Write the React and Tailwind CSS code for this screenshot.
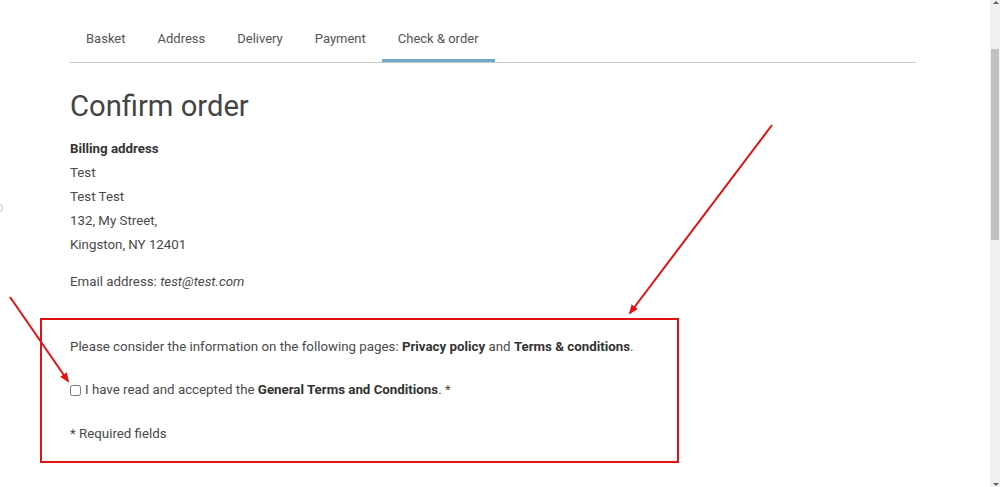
import React from 'react';

const tabs = ['Basket', 'Address', 'Delivery', 'Payment', 'Check & order'];

const Arrows = () => (
  <svg className="absolute inset-0 pointer-events-none" width="990" height="487" viewBox="0 0 990 487">
    <defs>
      <marker id="head" markerWidth="10" markerHeight="10" refX="8" refY="5" orient="auto" markerUnits="userSpaceOnUse">
        <path d="M0,1 L10,5 L0,9 Z" fill="#e31212" />
      </marker>
    </defs>
    <line x1="772" y1="125" x2="630" y2="313" stroke="#e31212" strokeWidth="2" markerEnd="url(#head)" />
    <line x1="10" y1="297" x2="68" y2="381" stroke="#e31212" strokeWidth="2" markerEnd="url(#head)" />
  </svg>
);

const Scrollbar = () => (
  <div className="w-[10px] h-[487px] bg-[#f0f0f0] relative flex-none">
    <div className="absolute top-[1px] left-[3px] w-0 h-0 border-l-[3px] border-r-[3px] border-b-[3px] border-l-transparent border-r-transparent border-b-[#606060]" />
    <div className="absolute top-[49px] left-[1px] w-[8px] h-[191px] bg-[#c1c1c1]" />
    <div className="absolute bottom-[1px] left-[3px] w-0 h-0 border-l-[3px] border-r-[3px] border-t-[3px] border-l-transparent border-r-transparent border-t-[#606060]" />
  </div>
);

export default function App() {
  return (
    <div className="flex w-[1000px] h-[487px] overflow-hidden bg-white" style={{ fontFamily: 'Roboto, "Liberation Sans", sans-serif' }}>
      <div className="relative flex-1">
        <div className="pl-[70px] w-[916px]">
          {/* Steps */}
          <nav className="flex border-b border-[#c8c8c8] text-[13px] leading-[20px] text-[#555]">
            {tabs.map((t) => (
              <div
                key={t}
                className={`px-[16px] pt-[29px] pb-[10px] border-b-[3px] ${
                  t === 'Check & order' ? 'border-[#6fa8c6]' : 'border-transparent'
                }`}
              >
                {t}
              </div>
            ))}
          </nav>

          <h1 className="mt-[25px] text-[29.2px] leading-[36px] text-[#444] font-normal">Confirm order</h1>

          <div className="mt-[13px] text-[13.3px] leading-[24px] text-[#4a4a4a]">
            <p className="font-bold text-[#333]">Billing address</p>
            <p>Test</p>
            <p>Test Test</p>
            <p>132, My Street,</p>
            <p>Kingston, NY 12401</p>
            <p className="mt-[13px]">
              Email address: <em>test@test.com</em>
            </p>
          </div>

          {/* highlighted terms block */}
          <div className="mt-[24px] ml-[-30px] w-[639px] border-2 border-[#e31212] pl-[28px] pt-[15px] pb-[15px] text-[13.3px] leading-[24px] text-[#4a4a4a]">
            <p>
              Please consider the information on the following pages: <b className="text-[#333]">Privacy policy</b> and{' '}
              <b className="text-[#333]">Terms &amp; conditions</b>.
            </p>
            <label className="mt-[19px] flex items-center gap-[4px]">
              <input type="checkbox" className="w-[11px] h-[11px] m-0" />
              <span>
                I have read and accepted the <b className="text-[#333]">General Terms and Conditions</b>. *
              </span>
            </label>
            <p className="mt-[20px]">* Required fields</p>
          </div>
        </div>

        <div className="absolute left-[-7px] top-[203px] w-[10px] h-[10px] rounded-full border border-[#bbb]" />
        <Arrows />
      </div>
      <Scrollbar />
    </div>
  );
}
